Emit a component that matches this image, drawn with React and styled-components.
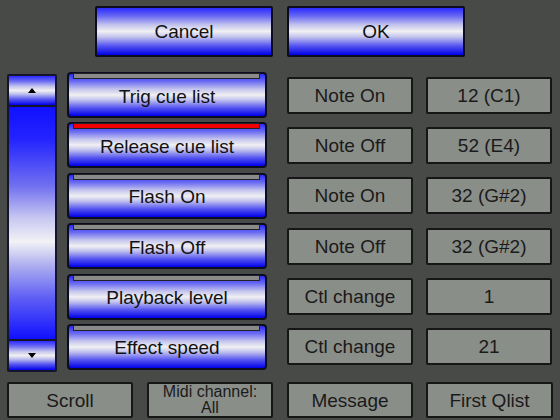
import React from "react";
import styled, { createGlobalStyle } from "styled-components";

const Global = createGlobalStyle`
  html, body { margin: 0; padding: 0; background: #474a46; }
  body { width: 560px; height: 420px; overflow: hidden; font-family: "Liberation Sans", Arial, sans-serif; }
`;

const blueGrad = `linear-gradient(to bottom, #2a2aff 0%, #6c6cf2 18%, #c4c4ee 36%, #f0f0f2 50%, #c0c0ee 62%, #5858f0 80%, #0000ea 100%)`;

const Page = styled.div`
  width: 560px;
  height: 420px;
  box-sizing: border-box;
  padding: 6px 8px 0 7px;
  display: flex;
  flex-direction: column;
`;

const TopBar = styled.div`
  display: flex;
  gap: 14px;
  padding-left: 88px;
`;

const BigButton = styled.div`
  width: 178px;
  height: 51px;
  box-sizing: border-box;
  border: 2px solid #0c0c20;
  border-radius: 2px;
  background: ${blueGrad};
  display: flex;
  align-items: center;
  justify-content: center;
  font-size: 19px;
  color: #121212;
`;

const Main = styled.div`
  display: flex;
  margin-top: 15px;
`;

const ScrollCol = styled.div`
  width: 50px;
  height: 298px;
  margin-top: 2px;
  margin-right: 10px;
  box-sizing: border-box;
  border: 2px solid #14142a;
  border-radius: 2px;
  display: flex;
  flex-direction: column;
`;

const ArrowButton = styled.div`
  height: 31px;
  box-sizing: border-box;
  ${(p) => (p.$down ? "border-top: 2px solid #14142a;" : "border-bottom: 2px solid #14142a;")}
  background: ${blueGrad};
  display: flex;
  align-items: center;
  justify-content: center;
`;

const Track = styled.div`
  flex: 1;
  background: linear-gradient(to bottom, #1010ff 0%, #2424ff 14%, #7070f0 34%, #c8c8f2 48%, #f2f2f6 58%, #b0b0f0 68%, #6060f4 82%, #1010ff 100%);
`;

const Arrow = styled.div`
  width: 0;
  height: 0;
  border-left: 4px solid transparent;
  border-right: 4px solid transparent;
  ${(p) => (p.$down ? "border-top: 5px solid #000;" : "border-bottom: 5px solid #000;")}
`;

const List = styled.div`
  width: 200px;
  display: flex;
  flex-direction: column;
  gap: 4.4px;
`;

const ListButton = styled.div`
  height: 46px;
  box-sizing: border-box;
  border: 2px solid #0c0c20;
  border-radius: 4px;
  background: ${blueGrad};
  display: flex;
  flex-direction: column;
  font-size: 19px;
  color: #121212;
`;

const Tab = styled.div`
  height: 6px;
  margin: -1px 5px 0 4px;
  box-sizing: border-box;
  border: 1px solid #222;
  background: ${(p) => (p.$active ? "#f00000" : "#8a8a8a")};
`;

const ListLabel = styled.div`
  flex: 1;
  display: flex;
  align-items: center;
  justify-content: center;
  padding-bottom: 2px;
`;

const Cells = styled.div`
  margin-left: 20px;
  display: grid;
  grid-template-columns: 126px 126px;
  grid-auto-rows: 46px;
  column-gap: 13px;
  row-gap: 4.4px;
`;

const GrayButton = styled.div`
  height: ${(p) => p.$h || 37}px;
  align-self: center;
  box-sizing: border-box;
  border: 2px solid #161616;
  border-radius: 2px;
  background: #8a8e89;
  display: flex;
  align-items: center;
  justify-content: center;
  text-align: center;
  font-size: ${(p) => p.$fs || 19}px;
  line-height: ${(p) => p.$lh || 19}px;
  color: #1a1a1a;
  overflow: hidden;
`;

const BottomBar = styled.div`
  display: grid;
  grid-template-columns: 126px 126px 126px 126px;
  column-gap: 14px;
  margin-top: 10px;
  & > *:nth-child(4) { margin-left: -1px; }
`;

const rows = [
  { label: "Trig cue list", type: "Note On", val: "12 (C1)" },
  { label: "Release cue list", type: "Note Off", val: "52 (E4)", active: true },
  { label: "Flash On", type: "Note On", val: "32 (G#2)" },
  { label: "Flash Off", type: "Note Off", val: "32 (G#2)" },
  { label: "Playback level", type: "Ctl change", val: "1" },
  { label: "Effect speed", type: "Ctl change", val: "21" },
];

export default function App() {
  return (
    <>
      <Global />
      <Page>
        <TopBar>
          <BigButton>Cancel</BigButton>
          <BigButton>OK</BigButton>
        </TopBar>
        <Main>
          <ScrollCol>
            <ArrowButton>
              <Arrow />
            </ArrowButton>
            <Track />
            <ArrowButton $down>
              <Arrow $down />
            </ArrowButton>
          </ScrollCol>
          <List>
            {rows.map((r) => (
              <ListButton key={r.label}>
                <Tab $active={r.active} />
                <ListLabel>{r.label}</ListLabel>
              </ListButton>
            ))}
          </List>
          <Cells>
            {rows.map((r) => (
              <React.Fragment key={r.label}>
                <GrayButton>{r.type}</GrayButton>
                <GrayButton>{r.val}</GrayButton>
              </React.Fragment>
            ))}
          </Cells>
        </Main>
        <BottomBar>
          <GrayButton $h={36}>Scroll</GrayButton>
          <GrayButton $h={36} $fs={16} $lh={16}>
            Midi channel:
            <br />
            All
          </GrayButton>
          <GrayButton $h={36}>Message</GrayButton>
          <GrayButton $h={36}>First Qlist</GrayButton>
        </BottomBar>
      </Page>
    </>
  );
}
